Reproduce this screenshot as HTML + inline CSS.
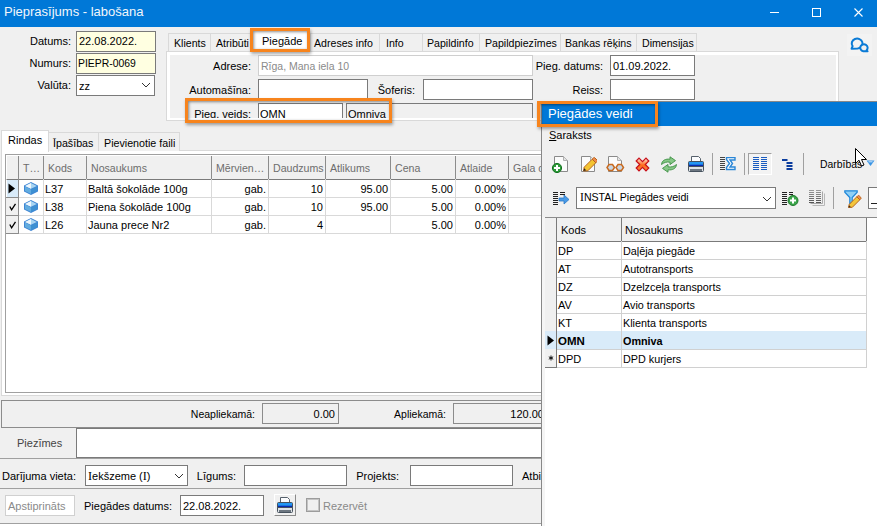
<!DOCTYPE html>
<html><head><meta charset="utf-8">
<style>
*{margin:0;padding:0;box-sizing:border-box}
html,body{width:877px;height:526px;overflow:hidden;background:#f0f0f0;font-family:"Liberation Sans",sans-serif;font-size:11px;color:#000;position:relative}
.a{position:absolute}
.t{position:absolute;white-space:nowrap;line-height:13px;font-size:11px}
.s{font-size:10.5px}
.si{font-family:"Liberation Serif",serif;font-size:1.1em}
.f{position:absolute;border:1px solid #7a7a7a;background:#fff}
.y{background:#ffffe1}
.tab{position:absolute;border:1px solid #d9d9d9;border-bottom:none;background:#f0f0f0}
.or{position:absolute;border:3px solid #f7841d;box-shadow:1px 2px 3px rgba(0,0,0,.35), inset 1px 1px 3px rgba(0,0,0,.45)}
.clip{position:absolute;overflow:hidden}
</style></head><body>
<div class="a" style="left:0px;top:0px;width:877px;height:27px;background:#0078d7"></div>
<div class="t" style="left:4px;top:4px;font-size:13px;line-height:15px;color:#f2f6fb">Pieprasījums - labošana</div>
<div class="a" style="left:770px;top:12px;width:9px;height:1px;background:#fff"></div>
<div class="a" style="left:812px;top:8px;width:9px;height:9px;border:1px solid #fff"></div>
<svg class="a" style="left:853px;top:7px" width="11" height="11"><path d="M1.5 1.5L9.5 9.5M9.5 1.5L1.5 9.5" stroke="#fff" stroke-width="1.1"/></svg>
<div class="t" style="right:806px;top:35px;text-align:right;">Datums:</div>
<div class="f" style="left:76px;top:31px;width:80px;height:21px;background:#ffffe1"></div>
<div class="t" style="left:79px;top:35px;">22.08.2022.</div>
<div class="t" style="right:806px;top:57px;text-align:right;">Numurs:</div>
<div class="f" style="left:76px;top:53px;width:80px;height:21px;background:#ffffe1"></div>
<div class="t" style="left:78px;top:57px;font-size:10.4px">PIEPR-0069</div>
<div class="t" style="right:806px;top:79px;text-align:right;">Valūta:</div>
<div class="f" style="left:76px;top:75px;width:79px;height:21px;"></div>
<div class="t" style="left:79px;top:80px;">zz</div>
<svg class="a" style="left:141px;top:81px" width="10" height="8"><path d="M1 2L5 6L9 2" stroke="#333" fill="none"/></svg>
<div class="tab" style="left:168px;top:33px;width:43px;height:18px"></div>
<div class="t" style="left:174px;top:37px;font-size:10.6px">Klients</div>
<div class="tab" style="left:210px;top:33px;width:41px;height:18px"></div>
<div class="t" style="left:216px;top:37px;font-size:10.6px">Atribūti</div>
<div class="tab" style="left:310px;top:33px;width:70px;height:18px"></div>
<div class="t" style="left:314px;top:37px;font-size:10.6px">Adreses info</div>
<div class="tab" style="left:379px;top:33px;width:44px;height:18px"></div>
<div class="t" style="left:386px;top:37px;font-size:10.6px">Info</div>
<div class="tab" style="left:422px;top:33px;width:58px;height:18px"></div>
<div class="t" style="left:427px;top:37px;font-size:10.6px">Papildinfo</div>
<div class="tab" style="left:479px;top:33px;width:82px;height:18px"></div>
<div class="t" style="left:485px;top:37px;font-size:10.6px">Papildpiezīmes</div>
<div class="tab" style="left:560px;top:33px;width:77px;height:18px"></div>
<div class="t" style="left:565px;top:37px;font-size:10.6px">Bankas rēķins</div>
<div class="tab" style="left:636px;top:33px;width:61px;height:18px"></div>
<div class="t" style="left:642px;top:37px;font-size:10.6px">Dimensijas</div>
<div class="a" style="left:166px;top:51px;width:673px;height:70px;border:1px solid #d9d9d9;background:#fff"></div>
<div class="a" style="left:170px;top:55px;width:666px;height:63px;background:#f0f0f0"></div>
<div class="a" style="left:252px;top:30px;width:57px;height:22px;background:#fff"></div>
<div class="t" style="left:262px;top:35px;">Piegāde</div>
<div class="t" style="right:626px;top:60px;text-align:right;">Adrese:</div>
<div class="f" style="left:258px;top:55px;width:275px;height:21px;border-color:#cfcfcf"></div>
<div class="t" style="left:261px;top:60px;color:#8a8a8a;font-size:10.5px">Rīga, Mana iela 10</div>
<div class="t" style="right:626px;top:84px;text-align:right;">Automašīna:</div>
<div class="f" style="left:258px;top:79px;width:110px;height:21px;"></div>
<div class="t" style="right:462px;top:84px;text-align:right;">Šoferis:</div>
<div class="f" style="left:423px;top:79px;width:110px;height:21px;"></div>
<div class="clip" style="left:170px;top:98px;width:666px;height:20px">
<div class="t" style="right:585px;top:10px;text-align:right">Pieg. veids:</div>
<div class="a" style="left:88px;top:5px;width:85px;height:16px;border:1px solid #7a7a7a;border-bottom:none;background:#fff"></div>
<div class="t" style="left:90px;top:10px;">OMN</div>
<div class="a" style="left:176px;top:5px;width:187px;height:16px;border:1px solid #7a7a7a;border-bottom:none;background:#f0f0f0"></div>
<div class="t" style="left:178px;top:10px;">Omniva</div>
</div>
<div class="t" style="right:274px;top:60px;text-align:right;">Pieg. datums:</div>
<div class="f" style="left:610px;top:55px;width:85px;height:21px;"></div>
<div class="t" style="left:613px;top:60px;">01.09.2022.</div>
<div class="t" style="right:274px;top:84px;text-align:right;">Reiss:</div>
<div class="f" style="left:610px;top:79px;width:85px;height:21px;"></div>
<div class="a" style="left:847px;top:34px;width:25px;height:22px;background:#f3f3f3"></div>
<svg class="a" style="left:849px;top:36px" width="21" height="18" viewBox="0 0 21 18"><g fill="none" stroke="#0b7bd6" stroke-width="2" stroke-linejoin="round"><path d="M3.6 10.2A5.4 4.9 0 1 1 8.6 12.4L2.6 12.7Z"/><path d="M17.6 14.2A3.7 3.5 0 1 0 14.3 15.2L18.6 15.3Z" fill="#f0f0f0"/></g></svg>
<div class="or" style="left:250px;top:28px;width:60px;height:24px"></div>
<div class="or" style="left:185px;top:98px;width:207px;height:25px"></div>
<div class="a" style="left:1px;top:150px;width:541px;height:246px;border:1px solid #d9d9d9;background:#fff"></div>
<div class="tab" style="left:48px;top:132px;width:51px;height:19px"></div>
<div class="t" style="left:53px;top:137px;font-size:10.7px">Īpašības</div>
<div class="tab" style="left:98px;top:132px;width:82px;height:19px"></div>
<div class="t" style="left:104px;top:137px;font-size:10.7px">Pievienotie faili</div>
<div class="a" style="left:1px;top:130px;width:48px;height:22px;border:1px solid #d9d9d9;border-bottom:none;background:#fff"></div>
<div class="t" style="left:8px;top:134px;">Rindas</div>
<div class="a" style="left:5px;top:154px;width:537px;height:239px;border:1px solid #a0a0a0;background:#fff"></div>
<div class="a" style="left:6px;top:155px;width:536px;height:25px;background:#f0f0f0;border-top:1px solid #fff;border-left:1px solid #fff;border-bottom:1px solid #7a7a7a"></div>
<div class="a" style="left:18px;top:156px;width:1px;height:23px;background:#8c8c8c"></div>
<div class="a" style="left:43px;top:156px;width:1px;height:23px;background:#8c8c8c"></div>
<div class="a" style="left:86px;top:156px;width:1px;height:23px;background:#8c8c8c"></div>
<div class="a" style="left:211px;top:156px;width:1px;height:23px;background:#8c8c8c"></div>
<div class="a" style="left:268px;top:156px;width:1px;height:23px;background:#8c8c8c"></div>
<div class="a" style="left:325px;top:156px;width:1px;height:23px;background:#8c8c8c"></div>
<div class="a" style="left:390px;top:156px;width:1px;height:23px;background:#8c8c8c"></div>
<div class="a" style="left:455px;top:156px;width:1px;height:23px;background:#8c8c8c"></div>
<div class="a" style="left:508px;top:156px;width:1px;height:23px;background:#8c8c8c"></div>
<div class="t" style="left:23px;top:162px;color:#6d6d6d;font-size:10.6px">T…</div>
<div class="t" style="left:48px;top:162px;color:#6d6d6d;font-size:10.6px">Kods</div>
<div class="t" style="left:91px;top:162px;color:#6d6d6d;font-size:10.6px">Nosaukums</div>
<div class="t" style="left:216px;top:162px;color:#6d6d6d;font-size:10.6px">Mērvien…</div>
<div class="t" style="left:273px;top:162px;color:#6d6d6d;font-size:10.6px">Daudzums</div>
<div class="t" style="left:330px;top:162px;color:#6d6d6d;font-size:10.6px">Atlikums</div>
<div class="t" style="left:395px;top:162px;color:#6d6d6d;font-size:10.6px">Cena</div>
<div class="t" style="left:460px;top:162px;color:#6d6d6d;font-size:10.6px">Atlaide</div>
<div class="t" style="left:513px;top:162px;color:#6d6d6d;font-size:10.6px">Gala c</div>
<div class="a" style="left:6px;top:197px;width:536px;height:1px;background:#d9d9d9"></div>
<div class="a" style="left:18px;top:179px;width:1px;height:19px;background:#d9d9d9"></div>
<div class="a" style="left:43px;top:179px;width:1px;height:19px;background:#d9d9d9"></div>
<div class="a" style="left:86px;top:179px;width:1px;height:19px;background:#d9d9d9"></div>
<div class="a" style="left:211px;top:179px;width:1px;height:19px;background:#d9d9d9"></div>
<div class="a" style="left:268px;top:179px;width:1px;height:19px;background:#d9d9d9"></div>
<div class="a" style="left:325px;top:179px;width:1px;height:19px;background:#d9d9d9"></div>
<div class="a" style="left:390px;top:179px;width:1px;height:19px;background:#d9d9d9"></div>
<div class="a" style="left:455px;top:179px;width:1px;height:19px;background:#d9d9d9"></div>
<div class="a" style="left:508px;top:179px;width:1px;height:19px;background:#d9d9d9"></div>
<div class="a" style="left:18px;top:179px;width:1px;height:19px;background:#8c8c8c"></div>
<div class="a" style="left:6px;top:197px;width:12px;height:1px;background:#8c8c8c"></div>
<div class="a" style="left:7px;top:180px;width:11px;height:17px;background:#d9ebf9"></div>
<svg class="a" style="left:8px;top:183px" width="8" height="11"><path d="M0.5 0.5L7 5.5L0.5 10.5Z" fill="#000"/></svg>
<svg class="a" style="left:24px;top:182px" width="14" height="13" viewBox="0 0 14 13"><path d="M7 0L14 3.5V9.5L7 13L0 9.5V3.5Z" fill="#3f86d4"/><path d="M1 4.6L7 7.4V12L1 9Z" fill="#62acdf"/><path d="M7 7.4L13 4.6V9L7 12Z" fill="#3e90d2"/><path d="M7 1.1L12.8 3.9L7 6.7L1.2 3.9Z" fill="#a9d5f2"/><path d="M7 1.1L1.2 3.9L7 6.7Z" fill="#eef7fd"/></svg>
<div class="t" style="left:45px;top:183px;">L37</div>
<div class="t" style="left:88px;top:183px;">Baltā šokolāde 100g</div>
<div class="t" style="right:611px;top:183px;text-align:right;">gab.</div>
<div class="t" style="right:554px;top:183px;text-align:right;">10</div>
<div class="t" style="right:489px;top:183px;text-align:right;">95.00</div>
<div class="t" style="right:424px;top:183px;text-align:right;">5.00</div>
<div class="t" style="right:371px;top:183px;text-align:right;">0.00%</div>
<div class="a" style="left:6px;top:215px;width:536px;height:1px;background:#d9d9d9"></div>
<div class="a" style="left:18px;top:197px;width:1px;height:19px;background:#d9d9d9"></div>
<div class="a" style="left:43px;top:197px;width:1px;height:19px;background:#d9d9d9"></div>
<div class="a" style="left:86px;top:197px;width:1px;height:19px;background:#d9d9d9"></div>
<div class="a" style="left:211px;top:197px;width:1px;height:19px;background:#d9d9d9"></div>
<div class="a" style="left:268px;top:197px;width:1px;height:19px;background:#d9d9d9"></div>
<div class="a" style="left:325px;top:197px;width:1px;height:19px;background:#d9d9d9"></div>
<div class="a" style="left:390px;top:197px;width:1px;height:19px;background:#d9d9d9"></div>
<div class="a" style="left:455px;top:197px;width:1px;height:19px;background:#d9d9d9"></div>
<div class="a" style="left:508px;top:197px;width:1px;height:19px;background:#d9d9d9"></div>
<div class="a" style="left:18px;top:197px;width:1px;height:19px;background:#8c8c8c"></div>
<div class="a" style="left:6px;top:215px;width:12px;height:1px;background:#8c8c8c"></div>
<div class="a" style="left:6px;top:198px;width:12px;height:17px;background:#f0f0f0"></div>
<svg class="a" style="left:9px;top:203px" width="8" height="8"><path d="M0.8 3.5L2.6 6.8L6.5 0.8" stroke="#000" fill="none" stroke-width="1.3"/></svg>
<svg class="a" style="left:24px;top:200px" width="14" height="13" viewBox="0 0 14 13"><path d="M7 0L14 3.5V9.5L7 13L0 9.5V3.5Z" fill="#3f86d4"/><path d="M1 4.6L7 7.4V12L1 9Z" fill="#62acdf"/><path d="M7 7.4L13 4.6V9L7 12Z" fill="#3e90d2"/><path d="M7 1.1L12.8 3.9L7 6.7L1.2 3.9Z" fill="#a9d5f2"/><path d="M7 1.1L1.2 3.9L7 6.7Z" fill="#eef7fd"/></svg>
<div class="t" style="left:45px;top:201px;">L38</div>
<div class="t" style="left:88px;top:201px;">Piena šokolāde 100g</div>
<div class="t" style="right:611px;top:201px;text-align:right;">gab.</div>
<div class="t" style="right:554px;top:201px;text-align:right;">10</div>
<div class="t" style="right:489px;top:201px;text-align:right;">95.00</div>
<div class="t" style="right:424px;top:201px;text-align:right;">5.00</div>
<div class="t" style="right:371px;top:201px;text-align:right;">0.00%</div>
<div class="a" style="left:6px;top:233px;width:536px;height:1px;background:#d9d9d9"></div>
<div class="a" style="left:18px;top:215px;width:1px;height:19px;background:#d9d9d9"></div>
<div class="a" style="left:43px;top:215px;width:1px;height:19px;background:#d9d9d9"></div>
<div class="a" style="left:86px;top:215px;width:1px;height:19px;background:#d9d9d9"></div>
<div class="a" style="left:211px;top:215px;width:1px;height:19px;background:#d9d9d9"></div>
<div class="a" style="left:268px;top:215px;width:1px;height:19px;background:#d9d9d9"></div>
<div class="a" style="left:325px;top:215px;width:1px;height:19px;background:#d9d9d9"></div>
<div class="a" style="left:390px;top:215px;width:1px;height:19px;background:#d9d9d9"></div>
<div class="a" style="left:455px;top:215px;width:1px;height:19px;background:#d9d9d9"></div>
<div class="a" style="left:508px;top:215px;width:1px;height:19px;background:#d9d9d9"></div>
<div class="a" style="left:18px;top:215px;width:1px;height:19px;background:#8c8c8c"></div>
<div class="a" style="left:6px;top:233px;width:12px;height:1px;background:#8c8c8c"></div>
<div class="a" style="left:6px;top:216px;width:12px;height:17px;background:#f0f0f0"></div>
<svg class="a" style="left:9px;top:221px" width="8" height="8"><path d="M0.8 3.5L2.6 6.8L6.5 0.8" stroke="#000" fill="none" stroke-width="1.3"/></svg>
<svg class="a" style="left:24px;top:218px" width="14" height="13" viewBox="0 0 14 13"><path d="M7 0L14 3.5V9.5L7 13L0 9.5V3.5Z" fill="#3f86d4"/><path d="M1 4.6L7 7.4V12L1 9Z" fill="#62acdf"/><path d="M7 7.4L13 4.6V9L7 12Z" fill="#3e90d2"/><path d="M7 1.1L12.8 3.9L7 6.7L1.2 3.9Z" fill="#a9d5f2"/><path d="M7 1.1L1.2 3.9L7 6.7Z" fill="#eef7fd"/></svg>
<div class="t" style="left:45px;top:219px;">L26</div>
<div class="t" style="left:88px;top:219px;">Jauna prece Nr2</div>
<div class="t" style="right:611px;top:219px;text-align:right;">gab.</div>
<div class="t" style="right:554px;top:219px;text-align:right;">4</div>
<div class="t" style="right:489px;top:219px;text-align:right;"></div>
<div class="t" style="right:424px;top:219px;text-align:right;">5.00</div>
<div class="t" style="right:371px;top:219px;text-align:right;">0.00%</div>
<div class="a" style="left:1px;top:400px;width:545px;height:28px;border:1px solid #8c8c8c;background:#f0f0f0"></div>
<div class="t" style="right:622px;top:408px;text-align:right;font-size:10.5px">Neapliekamā:</div>
<div class="f" style="left:262px;top:403px;width:77px;height:21px;background:#f0f0f0;border-color:#8c8c8c"></div>
<div class="t" style="right:542px;top:408px;text-align:right;">0.00</div>
<div class="t" style="right:431px;top:408px;text-align:right;font-size:10.5px">Apliekamā:</div>
<div class="f" style="left:453px;top:403px;width:120px;height:21px;background:#f0f0f0;border-color:#8c8c8c"></div>
<div class="t" style="right:333px;top:408px;text-align:right;">120.00</div>
<div class="t" style="left:17px;top:437px;color:#444">Piezīmes</div>
<div class="f" style="left:76px;top:428px;width:480px;height:30px;border-color:#7a7a7a"></div>
<div class="a" style="left:0px;top:458px;width:545px;height:1px;background:#a0a0a0"></div>
<div class="t" style="left:2px;top:470px;">Darījuma vieta:</div>
<div class="f" style="left:85px;top:465px;width:103px;height:21px;"></div>
<div class="t" style="left:88px;top:470px;"><span class="si">I</span>ekšzeme (<span class="si">I</span>)</div>
<svg class="a" style="left:174px;top:472px" width="10" height="8"><path d="M1 2L5 6L9 2" stroke="#333" fill="none"/></svg>
<div class="t" style="right:641px;top:470px;text-align:right;">Līgums:</div>
<div class="f" style="left:244px;top:465px;width:103px;height:21px;"></div>
<div class="t" style="right:478px;top:470px;text-align:right;">Projekts:</div>
<div class="f" style="left:410px;top:465px;width:103px;height:21px;"></div>
<div class="t" style="left:522px;top:470px;">Atbi</div>
<div class="a" style="left:0px;top:488px;width:545px;height:1px;background:#a0a0a0"></div>
<div class="f" style="left:5px;top:495px;width:70px;height:21px;border-color:#d0d0d0"></div>
<div class="t" style="left:8px;top:500px;color:#8a8a8a">Apstiprināts</div>
<div class="t" style="left:84px;top:500px;">Piegādes datums:</div>
<div class="f" style="left:180px;top:495px;width:84px;height:21px;"></div>
<div class="t" style="left:183px;top:500px;">22.08.2022.</div>
<div class="a" style="left:274px;top:494px;width:22px;height:22px;border-top:1px solid #fff;border-left:1px solid #fff;border-right:1px solid #8a8a8a;border-bottom:1px solid #8a8a8a;background:#f0f0f0"></div>
<svg class="a" style="left:276px;top:496px" width="18" height="17" viewBox="0 0 18 17"><path d="M4.5 1.5H11.5L13.5 3.5V9H4.5Z" fill="#fbfcfe" stroke="#56616c"/><path d="M1.5 7.5Q1.5 6.5 2.5 6.5H15.5Q16.5 6.5 16.5 7.5V12H1.5Z" fill="#2196f3" stroke="#46525e"/><path d="M2 10.5H16" stroke="#0a2bb0" stroke-width="1.6"/><path d="M1.5 11.5H16.5V15.5Q16.5 16.5 15.5 16.5H2.5Q1.5 16.5 1.5 15.5Z" fill="#dfe3e7" stroke="#46525e"/><path d="M3 15H15" stroke="#46525e" stroke-width="1.5"/></svg>
<div class="f" style="left:306px;top:498px;width:14px;height:14px;border:1px solid #9c9c9c;box-shadow:inset 0 0 0 1px #c4c4c4;background:#f0f0f0"></div>
<div class="t" style="left:323px;top:500px;color:#8a8a8a">Rezervēt</div>
<div class="a" style="left:0px;top:523px;width:545px;height:1px;background:#a0a0a0"></div>
<div class="a" style="left:0px;top:524px;width:545px;height:2px;background:#fff"></div>
<div class="a" style="left:541px;top:101px;width:336px;height:425px;background:#fff;border-left:1px solid #888;border-top:1px solid #888"></div>
<div class="a" style="left:542px;top:102px;width:335px;height:24px;background:#0078d7"></div>
<div class="t" style="left:548px;top:106px;font-size:13px;line-height:15px;color:#fff">Piegādes veidi</div>
<div class="a" style="left:542px;top:126px;width:335px;height:91px;background:#f0f0f0"></div>
<div class="t" style="left:549px;top:129px;"><u>S</u>araksts</div>
<div class="a" style="left:542px;top:217px;width:3px;height:309px;background:#f5f5f5"></div>
<svg class="a" style="left:551px;top:156px" width="18" height="17" viewBox="0 0 18 17"><g transform="translate(3,0)"><path d="M0.5 0.5H9.5L13.5 4.5V15.5H0.5Z" fill="#fbfbfb" stroke="#8a8a8a"/><path d="M9.5 0.5V4.5H13.5" fill="#e4e4e4" stroke="#b0b0b0"/></g><circle cx="6" cy="12" r="4.6" fill="#2e9b3a" stroke="#13711f"/><path d="M6 9V15M3 12H9" stroke="#fff" stroke-width="2"/></svg>
<svg class="a" style="left:581px;top:156px" width="16" height="17" viewBox="0 0 16 17"><path d="M0.5 0.5H9.5L13.5 4.5V15.5H0.5Z" fill="#fbfbfb" stroke="#8a8a8a"/><path d="M9.5 0.5V4.5H13.5" fill="#e4e4e4" stroke="#b0b0b0"/><path d="M2.5 15L3.2 11.2L11.2 3.2L14.8 6.8L6.8 14.8Z" fill="#f4c431" stroke="#b8651c" stroke-width="1"/><path d="M11.2 3.2L12.6 1.8Q13.2 1.2 13.8 1.8L16.2 4.2Q16.8 4.8 16.2 5.4L14.8 6.8Z" fill="#f08a4b" stroke="#b8651c"/><path d="M2.5 15L3.2 12.3L5.2 14.3Z" fill="#222"/></svg>
<svg class="a" style="left:606px;top:156px" width="19" height="17" viewBox="0 0 19 17"><g transform="translate(2,0)"><path d="M0.5 0.5H9.5L13.5 4.5V15.5H0.5Z" fill="#fbfbfb" stroke="#8a8a8a"/><path d="M9.5 0.5V4.5H13.5" fill="#e4e4e4" stroke="#b0b0b0"/></g><path d="M3 8.5H6.5L8.5 11.5L6.5 14.5H3L1 11.5Z" fill="#c8d6e3" stroke="#c86a1f" stroke-width="1.5"/><path d="M12 8.5H15.5L17.5 11.5L15.5 14.5H12L10 11.5Z" fill="#c8d6e3" stroke="#c86a1f" stroke-width="1.5"/></svg>
<svg class="a" style="left:635px;top:157px" width="15" height="15" viewBox="0 0 15 15"><defs><linearGradient id="gx" x1="0" y1="0" x2="0" y2="1"><stop offset="0" stop-color="#ffe6dc"/><stop offset=".55" stop-color="#ff6a1a"/><stop offset="1" stop-color="#f4874a"/></linearGradient></defs><path d="M1.2 4L4 1.2L7.5 4.7L11 1.2L13.8 4L10.3 7.5L13.8 11L11 13.8L7.5 10.3L4 13.8L1.2 11L4.7 7.5Z" fill="url(#gx)" stroke="#c8101a" stroke-width="1.2" stroke-linejoin="miter"/></svg>
<svg class="a" style="left:660px;top:156px" width="18" height="17" viewBox="0 0 18 17"><path d="M1.5 8.5C1.8 4.5 5.5 2.6 10 3.2V0.8L15.5 4.6L10 8.6V6.2C6.5 5.6 4 6.5 1.5 8.5Z" fill="#86c886" stroke="#3f9045" stroke-width=".9"/><path d="M16.5 8.5C16.2 12.5 12.5 14.4 8 13.8V16.2L2.5 12.4L8 8.4V10.8C11.5 11.4 14 10.5 16.5 8.5Z" fill="#86c886" stroke="#3f9045" stroke-width=".9"/></svg>
<svg class="a" style="left:687px;top:155px" width="18" height="17" viewBox="0 0 18 17"><path d="M4.5 1.5H11.5L13.5 3.5V9H4.5Z" fill="#fbfcfe" stroke="#56616c"/><path d="M1.5 7.5Q1.5 6.5 2.5 6.5H15.5Q16.5 6.5 16.5 7.5V12H1.5Z" fill="#2196f3" stroke="#46525e"/><path d="M2 10.5H16" stroke="#0a2bb0" stroke-width="1.6"/><path d="M1.5 11.5H16.5V15.5Q16.5 16.5 15.5 16.5H2.5Q1.5 16.5 1.5 15.5Z" fill="#dfe3e7" stroke="#46525e"/><path d="M3 15H15" stroke="#46525e" stroke-width="1.5"/></svg>
<div class="a" style="left:712px;top:153px;width:1px;height:22px;background:#a0a0a0"></div>
<svg class="a" style="left:720px;top:157px" width="16" height="14" viewBox="0 0 16 14"><path d="M0 0.5H5M0 2.5H5M0 4.5H5M0 6.5H5M0 8.5H5M0 10.5H5M0 12.5H5" stroke="#444" stroke-width="1"/><path d="M6.5 0.5H15V3H10L12.5 6.5L10 10H15V12.5H6.5V10.5L9.5 6.5L6.5 2.5Z" fill="#fff" stroke="#2a86d6" stroke-width="1.4"/></svg>
<div class="a" style="left:744px;top:153px;width:1px;height:22px;background:#a0a0a0"></div>
<div class="a" style="left:748px;top:153px;width:24px;height:22px;border-top:1px solid #a0a0a0;border-left:1px solid #a0a0a0;border-bottom:1px solid #fff;border-right:1px solid #fff;background:#f3f3f3"></div>
<svg class="a" style="left:753px;top:157px" width="15" height="14" viewBox="0 0 15 14"><path d="M0 0.5H6M8 0.5H14" stroke="#1a5cc0" stroke-width="1"/><path d="M0 2.5H6M8 2.5H14" stroke="#1a5cc0" stroke-width="1"/><path d="M0 4.5H6M8 4.5H14" stroke="#1a5cc0" stroke-width="1"/><path d="M0 6.5H6M8 6.5H14" stroke="#1a5cc0" stroke-width="1"/><path d="M0 8.5H6M8 8.5H14" stroke="#1a5cc0" stroke-width="1"/><path d="M0 10.5H6M8 10.5H14" stroke="#1a5cc0" stroke-width="1"/><path d="M0 12.5H6M8 12.5H14" stroke="#1a5cc0" stroke-width="1"/></svg>
<svg class="a" style="left:782px;top:158px" width="11" height="12" viewBox="0 0 11 12"><path d="M0 2H5.5M4.5 5H10.5M4.5 8H10.5M4.5 11H10.5" stroke="#0b3d9e" stroke-width="2"/></svg>
<div class="a" style="left:803px;top:153px;width:1px;height:22px;background:#a0a0a0"></div>
<div class="t" style="left:820px;top:158px;font-size:10.4px">Darbības</div>
<svg class="a" style="left:866px;top:160px" width="9" height="7" viewBox="0 0 9 7"><path d="M0.5 0.5H8.5L4.5 6Z" fill="#3a94e4"/><path d="M2.5 1.8H6.5" stroke="#cfe6fa"/></svg>
<svg class="a" style="left:855px;top:148px" width="13" height="19" viewBox="0 0 13 19"><path d="M0.5 0.5V15.5L4 12.2L6.5 18L9 17L6.5 11.5H11.5Z" fill="#fff" stroke="#000" stroke-width="1"/></svg>
<svg class="a" style="left:553px;top:191px" width="17" height="15" viewBox="0 0 17 15"><path d="M0 1.5H5M0 3.5H5M0 5.5H5M0 7.5H5M0 9.5H5M0 11.5H5M0 13.5H5M7 1.5H12M7 3.5H12" stroke="#222" stroke-width="1"/><path d="M6 7H11V4L16 8.5L11 13V10H6Z" fill="#4a9ae6" stroke="#2a78c8" stroke-width=".8"/></svg>
<div class="f" style="left:576px;top:187px;width:200px;height:22px;"></div>
<div class="t" style="left:580px;top:191px;font-size:10.6px"><span class="si">I</span>NSTAL Piegādes veidi</div>
<svg class="a" style="left:762px;top:195px" width="10" height="8"><path d="M1 2L5 6L9 2" stroke="#333" fill="none"/></svg>
<svg class="a" style="left:782px;top:191px" width="17" height="15" viewBox="0 0 17 15"><path d="M0 1.5H5M0 3.5H5M0 5.5H5M0 7.5H5M0 9.5H5M0 11.5H5M0 13.5H5M7 1.5H11M7 3.5H11" stroke="#222" stroke-width="1"/><circle cx="11" cy="9.5" r="5" fill="#3aa54a" stroke="#1f7a2c"/><path d="M11 6.5V12.5M8 9.5H14" stroke="#fff" stroke-width="2"/></svg>
<svg class="a" style="left:808px;top:189px" width="18" height="18" viewBox="0 0 18 18"><path d="M1 1.5H6M8 1.5H13" stroke="#9a9a9a" stroke-width="1"/><path d="M1 3.5H6M8 3.5H13" stroke="#8f8f8f" stroke-width="1"/><path d="M1 5.5H6M8 5.5H13" stroke="#858585" stroke-width="1"/><path d="M1 7.5H6M8 7.5H13" stroke="#7a7a7a" stroke-width="1"/><path d="M1 9.5H6M8 9.5H13" stroke="#6f6f6f" stroke-width="1"/><path d="M1 11.5H6M8 11.5H13" stroke="#5f5f5f" stroke-width="1"/><path d="M1 13.5H6M8 13.5H13" stroke="#555" stroke-width="1"/><path d="M14.5 2.5V14.5H2.5" fill="none" stroke="#a8a8a8"/><path d="M16.5 4.5V16.5H4.5" fill="none" stroke="#b8b8b8"/></svg>
<div class="a" style="left:833px;top:187px;width:1px;height:22px;background:#a0a0a0"></div>
<svg class="a" style="left:844px;top:190px" width="18" height="19" viewBox="0 0 18 19"><path d="M0.8 0.8H13.2V2.2L8.2 7.6V12.5L5.8 13.8V7.6L0.8 2.2Z" fill="#8fd0f6" stroke="#1f86d9" stroke-width="1.2"/><path d="M4.5 17.5L5.3 14.3L12.8 6.8L15.8 9.8L8.3 17.3Z" fill="#f3c53a" stroke="#b8651c"/><path d="M12.8 6.8L13.8 5.8Q14.5 5.1 15.2 5.8L16.8 7.4Q17.5 8.1 16.8 8.8L15.8 9.8Z" fill="#f08a4b" stroke="#b8651c"/><path d="M4.5 17.5L5 15.2L6.8 17Z" fill="#3a2a1a"/></svg>
<div class="f" style="left:868px;top:187px;width:20px;height:22px;"></div>
<div class="a" style="left:871px;top:203px;width:6px;height:1px;background:#222"></div>
<div class="a" style="left:545px;top:217px;width:332px;height:1px;background:#8c8c8c"></div>
<div class="a" style="left:545px;top:218px;width:321px;height:24px;background:#f0f0f0;border-bottom:1px solid #7a7a7a"></div>
<div class="a" style="left:866px;top:218px;width:1px;height:24px;background:#7a7a7a"></div>
<div class="a" style="left:556px;top:218px;width:1px;height:23px;background:#7a7a7a"></div>
<div class="a" style="left:621px;top:218px;width:1px;height:23px;background:#7a7a7a"></div>
<div class="t" style="left:561px;top:224px;">Kods</div>
<div class="t" style="left:625px;top:224px;">Nosaukums</div>
<div class="a" style="left:545px;top:241px;width:11px;height:18px;background:#f0f0f0"></div>
<div class="a" style="left:546px;top:259px;width:321px;height:1px;background:#d0d0d0"></div>
<div class="a" style="left:545px;top:259px;width:11px;height:1px;background:#7a7a7a"></div>
<div class="a" style="left:556px;top:241px;width:1px;height:19px;background:#7a7a7a"></div>
<div class="a" style="left:621px;top:241px;width:1px;height:19px;background:#d0d0d0"></div>
<div class="a" style="left:866px;top:241px;width:1px;height:19px;background:#d0d0d0"></div>
<div class="t" style="left:558px;top:245px;">DP</div>
<div class="t" style="left:623px;top:245px;;font-size:10.8px">Daļēja piegāde</div>
<div class="a" style="left:545px;top:259px;width:11px;height:18px;background:#f0f0f0"></div>
<div class="a" style="left:546px;top:277px;width:321px;height:1px;background:#d0d0d0"></div>
<div class="a" style="left:545px;top:277px;width:11px;height:1px;background:#7a7a7a"></div>
<div class="a" style="left:556px;top:259px;width:1px;height:19px;background:#7a7a7a"></div>
<div class="a" style="left:621px;top:259px;width:1px;height:19px;background:#d0d0d0"></div>
<div class="a" style="left:866px;top:259px;width:1px;height:19px;background:#d0d0d0"></div>
<div class="t" style="left:558px;top:263px;">AT</div>
<div class="t" style="left:623px;top:263px;;font-size:10.8px">Autotransports</div>
<div class="a" style="left:545px;top:277px;width:11px;height:18px;background:#f0f0f0"></div>
<div class="a" style="left:546px;top:295px;width:321px;height:1px;background:#d0d0d0"></div>
<div class="a" style="left:545px;top:295px;width:11px;height:1px;background:#7a7a7a"></div>
<div class="a" style="left:556px;top:277px;width:1px;height:19px;background:#7a7a7a"></div>
<div class="a" style="left:621px;top:277px;width:1px;height:19px;background:#d0d0d0"></div>
<div class="a" style="left:866px;top:277px;width:1px;height:19px;background:#d0d0d0"></div>
<div class="t" style="left:558px;top:281px;">DZ</div>
<div class="t" style="left:623px;top:281px;;font-size:10.8px">Dzelzceļa transports</div>
<div class="a" style="left:545px;top:295px;width:11px;height:18px;background:#f0f0f0"></div>
<div class="a" style="left:546px;top:313px;width:321px;height:1px;background:#d0d0d0"></div>
<div class="a" style="left:545px;top:313px;width:11px;height:1px;background:#7a7a7a"></div>
<div class="a" style="left:556px;top:295px;width:1px;height:19px;background:#7a7a7a"></div>
<div class="a" style="left:621px;top:295px;width:1px;height:19px;background:#d0d0d0"></div>
<div class="a" style="left:866px;top:295px;width:1px;height:19px;background:#d0d0d0"></div>
<div class="t" style="left:558px;top:299px;">AV</div>
<div class="t" style="left:623px;top:299px;;font-size:10.8px">Avio transports</div>
<div class="a" style="left:545px;top:313px;width:11px;height:18px;background:#f0f0f0"></div>
<div class="a" style="left:546px;top:331px;width:321px;height:1px;background:#d0d0d0"></div>
<div class="a" style="left:545px;top:331px;width:11px;height:1px;background:#7a7a7a"></div>
<div class="a" style="left:556px;top:313px;width:1px;height:19px;background:#7a7a7a"></div>
<div class="a" style="left:621px;top:313px;width:1px;height:19px;background:#d0d0d0"></div>
<div class="a" style="left:866px;top:313px;width:1px;height:19px;background:#d0d0d0"></div>
<div class="t" style="left:558px;top:317px;">KT</div>
<div class="t" style="left:623px;top:317px;;font-size:10.8px">Klienta transports</div>
<div class="a" style="left:545px;top:331px;width:11px;height:18px;background:#d9ebf9"></div>
<div class="a" style="left:557px;top:331px;width:309px;height:18px;background:#d9ebf9"></div>
<svg class="a" style="left:547px;top:335px" width="8" height="11"><path d="M0.5 0.5L7 5.5L0.5 10.5Z" fill="#000"/></svg>
<div class="a" style="left:546px;top:349px;width:321px;height:1px;background:#d0d0d0"></div>
<div class="a" style="left:545px;top:349px;width:11px;height:1px;background:#7a7a7a"></div>
<div class="a" style="left:556px;top:331px;width:1px;height:19px;background:#7a7a7a"></div>
<div class="a" style="left:621px;top:331px;width:1px;height:19px;background:#d0d0d0"></div>
<div class="a" style="left:866px;top:331px;width:1px;height:19px;background:#d0d0d0"></div>
<div class="t" style="left:558px;top:335px;font-weight:bold;font-size:11.5px">OMN</div>
<div class="t" style="left:623px;top:335px;font-weight:bold;font-size:11.5px;font-size:10.8px">Omniva</div>
<div class="a" style="left:545px;top:349px;width:11px;height:18px;background:#f0f0f0"></div>
<div class="a" style="left:546px;top:367px;width:321px;height:1px;background:#d0d0d0"></div>
<div class="a" style="left:545px;top:367px;width:11px;height:1px;background:#7a7a7a"></div>
<div class="a" style="left:556px;top:349px;width:1px;height:19px;background:#7a7a7a"></div>
<div class="a" style="left:621px;top:349px;width:1px;height:19px;background:#d0d0d0"></div>
<div class="a" style="left:866px;top:349px;width:1px;height:19px;background:#d0d0d0"></div>
<div class="t" style="left:558px;top:353px;">DPD</div>
<div class="t" style="left:623px;top:353px;;font-size:10.8px">DPD kurjers</div>
<svg class="a" style="left:548px;top:355px" width="6" height="6"><path d="M3 0.5V5.5M0.8 1.8L5.2 4.2M0.8 4.2L5.2 1.8" stroke="#000" stroke-width=".9"/></svg>
<div class="or" style="left:537px;top:101px;width:121px;height:26px"></div>
</body></html>
